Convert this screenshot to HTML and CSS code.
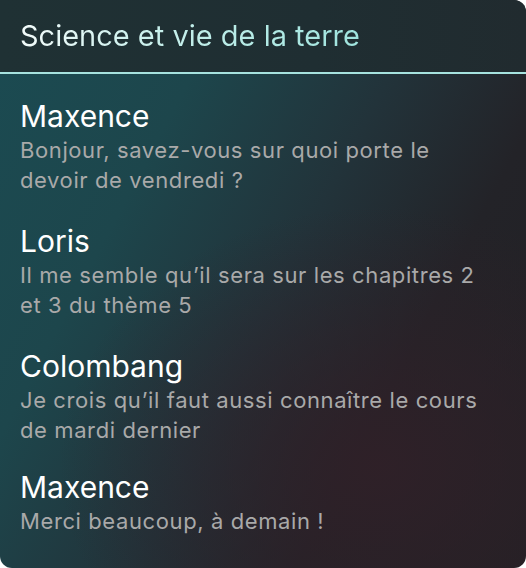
FILE: index.html
```html
<!DOCTYPE html>
<html lang="fr">
<head>
<meta charset="utf-8">
<link rel="stylesheet" href="styles.css">
</head>
<body>
<div class="card">
  <header class="head">
    <h1 class="title">Science et vie de la terre</h1>
  </header>
  <main class="messages">
    <div class="msg">
      <div class="name">Maxence</div>
      <div class="text">Bonjour, savez-vous sur quoi porte le devoir de vendredi ?</div>
    </div>
    <div class="msg">
      <div class="name">Loris</div>
      <div class="text">Il me semble qu’il sera sur les chapitres 2 et 3 du thème 5</div>
    </div>
    <div class="msg">
      <div class="name">Colombang</div>
      <div class="text">Je crois qu’il faut aussi connaître le cours de mardi dernier</div>
    </div>
    <div class="msg last">
      <div class="name">Maxence</div>
      <div class="text">Merci beaucoup, à demain !</div>
    </div>
  </main>
</div>
</body>
</html>
```
FILE: styles.css
```css
html, body {
  margin: 0;
  padding: 0;
  background: #ffffff;
}
body {
  font-family: Inter, "Noto Sans", sans-serif;
}
.card {
  width: 526px;
  height: 568px;
  border-radius: 0 12px 12px 12px;
  overflow: hidden;
  display: flex;
  flex-direction: column;
  background:
    radial-gradient(ellipse 320px 260px at 72% 82%, rgba(48, 32, 40, 0.9), rgba(48, 32, 40, 0) 100%),
    linear-gradient(118deg, #1b4b52 0%, #1d464c 28%, #22333a 52%, #232328 72%, #222024 100%);
}
.head {
  height: 72px;
  flex: none;
  display: flex;
  align-items: center;
  padding: 0 20px;
  background: linear-gradient(90deg, #1f3134 0%, #1f2e32 60%, #212b2f 100%);
  border-bottom: 2px solid #a6e3df;
}
.title {
  margin: 0;
  font-weight: 400;
  font-size: 29px;
  line-height: 34px;
  letter-spacing: 0;
  background: linear-gradient(90deg, #f2fbfa 0%, #c8f0ec 40%, #9fe4de 100%);
  -webkit-background-clip: text;
  background-clip: text;
  color: transparent;
}
.messages {
  display: flex;
  flex-direction: column;
  gap: 28px;
  padding: 24px 20px 0 20px;
}
.last {
  margin-top: -4px;
}
.name {
  color: #ffffff;
  font-size: 30px;
  line-height: 36px;
  margin-bottom: 1px;
}
.text {
  color: #a9a9a9;
  font-size: 22px;
  line-height: 30px;
  letter-spacing: 0.6px;
  max-width: 480px;
}
```
